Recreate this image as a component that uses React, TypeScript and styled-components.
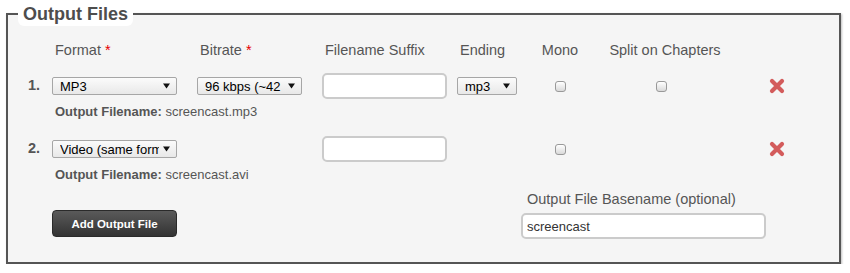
import styled, { createGlobalStyle } from 'styled-components';

const columns = '32px 145px 125px 135px 73px 60px 150px 74px';

const GlobalStyle = createGlobalStyle`
  body {
    margin: 0;
    background: #fff;
    font-family: 'Liberation Sans', Arial, sans-serif;
  }
`;

const Panel = styled.fieldset`
  margin: 2px 9px 0 6px;
  padding: 14px 10px 23px 12px;
  border: 2px solid #555;
  background: #f5f5f5;
  box-shadow: 1px 1px 2px rgba(0, 0, 0, 0.25);
  min-width: 0;
`;

const Legend = styled.legend`
  margin-left: -2px;
  padding: 0 5px;
  background: #fff;
  border-radius: 6px;
  font-size: 18px;
  font-weight: bold;
  line-height: 24px;
  color: #4d4d4d;
`;

const HeaderRow = styled.div`
  display: grid;
  grid-template-columns: ${columns};
  height: 20px;
  align-items: center;
  font-size: 14.5px;
  color: #555;
`;

const HeaderCell = styled.div<{ $center?: boolean }>`
  padding-left: ${(p) => (p.$center ? 0 : 3)}px;
  text-align: ${(p) => (p.$center ? 'center' : 'left')};
  white-space: nowrap;
`;

const Req = styled.span`
  color: #e60000;
`;

const List = styled.div`
  display: flex;
  flex-direction: column;
  gap: 14px;
  margin-top: 11px;
`;

const Entry = styled.div``;

const Row = styled.div`
  display: grid;
  grid-template-columns: ${columns};
  height: 30px;
  align-items: center;
`;

const Num = styled.div`
  padding: 0 0 3px 8px;
  font-size: 14.5px;
  font-weight: bold;
  color: #555;
`;

const Cell = styled.div<{ $center?: boolean; $shift?: number }>`
  display: flex;
  justify-content: ${(p) => (p.$center ? 'center' : 'flex-start')};
  padding-right: ${(p) => p.$shift ?? 0}px;
`;

const SelectBox = styled.div<{ $width: number }>`
  display: flex;
  align-items: center;
  box-sizing: border-box;
  width: ${(p) => p.$width}px;
  height: 18px;
  padding: 0 6px 0 7px;
  border: 1px solid #a6a6a6;
  border-radius: 2px;
  background: linear-gradient(#fbfbfb, #e8e8e8);
  font-size: 13px;
  color: #000;
`;

const SelectText = styled.span`
  flex: 1;
  overflow: hidden;
  white-space: nowrap;
  margin-right: 4px;
`;

const TextInput = styled.input<{ $width: number }>`
  box-sizing: border-box;
  width: ${(p) => p.$width}px;
  height: 26px;
  padding: 0 4px;
  border: 2px solid #cbcbcb;
  border-radius: 5px;
  background: #fff;
  font-family: 'Liberation Sans', Arial, sans-serif;
  font-size: 13px;
  color: #333;
  outline: none;
`;

const Check = styled.input`
  appearance: none;
  box-sizing: border-box;
  width: 11px;
  height: 11px;
  margin: 0;
  border: 1px solid #999;
  border-radius: 3px;
  background: linear-gradient(#ffffff, #d9d9d9);
`;

const FilenameLine = styled.div`
  margin-top: 3px;
  padding-left: 35px;
  font-size: 13px;
  line-height: 16px;
  color: #555;

  b {
    font-weight: bold;
  }
`;

const BottomBar = styled.div`
  display: flex;
  align-items: flex-end;
  margin-top: 8px;
  padding-left: 32px;
`;

const AddButton = styled.button`
  width: 125px;
  height: 27px;
  margin-bottom: 2px;
  border: 1px solid #2a2a2a;
  border-radius: 4px;
  background: linear-gradient(#5a5a5a, #333);
  color: #fff;
  font-family: 'Liberation Sans', Arial, sans-serif;
  font-size: 11.5px;
  font-weight: bold;
  cursor: pointer;
`;

const BasenameGroup = styled.div`
  display: flex;
  flex-direction: column;
  gap: 5px;
  margin-left: 344px;
`;

const BasenameLabel = styled.div`
  padding-left: 6px;
  font-size: 14.5px;
  line-height: 17px;
  color: #555;
`;

function Select({ width, value }: { width: number; value: string }) {
  return (
    <SelectBox $width={width}>
      <SelectText>{value}</SelectText>
      <svg width="7" height="6" viewBox="0 0 7 6">
        <path d="M0 0.5 H7 L3.5 5.5 Z" fill="#111" />
      </svg>
    </SelectBox>
  );
}

function RemoveIcon() {
  return (
    <svg width="16" height="16" viewBox="0 0 16 16">
      <path
        d="M3 3 L13 13 M13 3 L3 13"
        stroke="#d35b5b"
        strokeWidth="4.2"
        strokeLinecap="round"
      />
    </svg>
  );
}

const files = [
  { n: 1, format: 'MP3', bitrate: '96 kbps (~42 MB/hour)', ending: 'mp3', split: true, name: 'screencast.mp3' },
  { n: 2, format: 'Video (same format)', bitrate: null, ending: null, split: false, name: 'screencast.avi' },
];

export default function App() {
  return (
    <>
      <GlobalStyle />
      <Panel>
        <Legend>Output Files</Legend>
        <HeaderRow>
          <div />
          <HeaderCell>
            Format <Req>*</Req>
          </HeaderCell>
          <HeaderCell>
            Bitrate <Req>*</Req>
          </HeaderCell>
          <HeaderCell>Filename Suffix</HeaderCell>
          <HeaderCell>Ending</HeaderCell>
          <HeaderCell $center>Mono</HeaderCell>
          <HeaderCell $center>Split on Chapters</HeaderCell>
          <div />
        </HeaderRow>
        <List>
          {files.map((f) => (
            <Entry key={f.n}>
              <Row>
                <Num>{f.n}.</Num>
                <Cell>
                  <Select width={125} value={f.format} />
                </Cell>
                <Cell>{f.bitrate && <Select width={105} value={f.bitrate} />}</Cell>
                <Cell>
                  <TextInput $width={125} type="text" />
                </Cell>
                <Cell>{f.ending && <Select width={60} value={f.ending} />}</Cell>
                <Cell $center>
                  <Check type="checkbox" />
                </Cell>
                <Cell $center $shift={7}>
                  {f.split && <Check type="checkbox" />}
                </Cell>
                <Cell $center>
                  <RemoveIcon />
                </Cell>
              </Row>
              <FilenameLine>
                <b>Output Filename:</b> {f.name}
              </FilenameLine>
            </Entry>
          ))}
        </List>
        <BottomBar>
          <AddButton>Add Output File</AddButton>
          <BasenameGroup>
            <BasenameLabel>Output File Basename (optional)</BasenameLabel>
            <TextInput $width={245} type="text" defaultValue="screencast" />
          </BasenameGroup>
        </BottomBar>
      </Panel>
    </>
  );
}
